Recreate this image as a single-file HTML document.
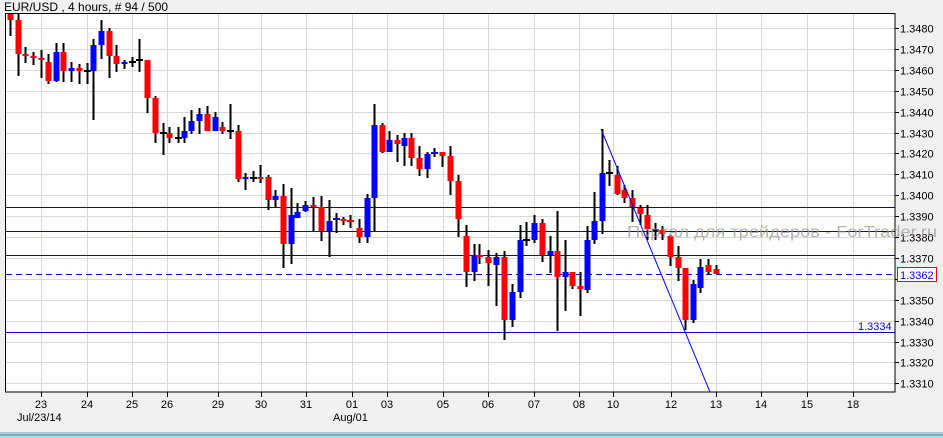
<!DOCTYPE html>
<html><head><meta charset="utf-8"><style>
html,body{margin:0;padding:0;background:#f0f0f0;width:943px;height:438px;overflow:hidden}
svg{display:block;font-family:"Liberation Sans",sans-serif}
</style></head><body>
<svg id="s" width="943" height="438" xmlns="http://www.w3.org/2000/svg">
<rect x="0" y="0" width="943" height="438" fill="#f0f0f0"/>
<text x="4" y="11" font-size="12" fill="#000">EUR/USD , 4 hours, # 94 / 500</text>
<rect x="5" y="13" width="890" height="379" fill="#fff"/>
<g id="grid" stroke="#d9d9d9" stroke-width="1"></g>
<g id="hl"></g>
<g id="candles"></g>
<line x1="601" y1="129" x2="710" y2="392" stroke="#0000ff" stroke-width="1"/>
<rect x="5.5" y="13.5" width="889.5" height="378.5" fill="none" stroke="#000"/>
<g id="axis" font-size="11" fill="#000"></g>
<text x="858" y="330" font-size="11" fill="#0000ff">1.3334</text>
<rect x="897.5" y="267.5" width="39" height="14" fill="#fff" stroke="#ff0000"/>
<text x="900" y="279" font-size="11" fill="#0000ff">1.3362</text>
<text x="627" y="237" font-size="16" fill="#a09898" fill-opacity="0.75" textLength="310" lengthAdjust="spacingAndGlyphs">Портал для трейдеров - ForTrader.ru</text>
<text x="17" y="421" font-size="11">Jul/23/14</text>
<text x="333" y="421" font-size="11">Aug/01</text>
<line x1="0" y1="433" x2="943" y2="433" stroke="#5fb6c8" stroke-width="1"/>
<line x1="0" y1="435" x2="943" y2="435" stroke="#1a6a8a" stroke-width="1"/>
<line x1="0" y1="437" x2="943" y2="437" stroke="#5fd0e0" stroke-width="1"/>
</svg>
<script>
var NS="http://www.w3.org/2000/svg";
function el(p,t,a,txt){var e=document.createElementNS(NS,t);for(var k in a)e.setAttribute(k,a[k]);if(txt)e.textContent=txt;document.getElementById(p).appendChild(e);return e;}
function py(p){return 28+(1.3480-p)*20900;}
for(var i=0;i<=17;i++){var p=1.3310+i*0.001;var y=Math.round(py(p))+0.5;
 el("grid","line",{x1:6,y1:y,x2:895,y2:y});
 el("axis","line",{x1:895,y1:y,x2:899,y2:y,stroke:"#000"});
 if(Math.abs(p-1.3360)>0.0004)el("axis","text",{x:900,y:y+4},p.toFixed(4));}
var vx=[41,87,132,167,218,261,306,352,387,443,488,534,579,613,671,716,761,807,853];
var vl=["23","24","25","26","29","30","31","01","03","05","06","07","08","10","12","13","14","15","18"];
for(var i=0;i<vx.length;i++){el("grid","line",{x1:vx[i]+0.5,y1:14,x2:vx[i]+0.5,y2:392});
 el("axis","line",{x1:vx[i]+0.5,y1:392,x2:vx[i]+0.5,y2:397,stroke:"#000"});
 el("axis","text",{x:vx[i],y:408,"text-anchor":"middle"},vl[i]);}
[207,231,255,332].forEach(function(a){el("hl","line",{x1:6,y1:a+0.5,x2:895,y2:a+0.5,stroke:"#0000c8"});});
el("hl","line",{x1:6,y1:274.5,x2:895,y2:274.5,stroke:"#0000ff","stroke-dasharray":"6,4"});
var C=[
[10,14,13,20,36,"r"],[18,13,20,54,76,"r"],[25,47,54,56,63,"r"],[33,52,56,58,65,"r"],[41,50,58,60,78,"r"],[48,54,62,81,84,"r"],
[56,43,52,81,82,"b"],[63,43,52,71,82,"r"],[71,62,68,71,82,"b"],[79,64,68,71,84,"r"],[87,63,71,71,84,"k"],[93,39,45,71,120,"b"],
[101,20,31,45,59,"b"],[109,28,31,56,78,"r"],[116,45,56,64,72,"r"],[124,60,62,64,69,"b"],[132,57,62,62,67,"k"],[139,39,60,60,72,"k"],
[147,60,60,98,113,"r"],[155,96,98,133,143,"r"],[163,123,133,133,155,"k"],[169,127,133,138,143,"r"],[178,127,138,138,143,"k"],
[184,117,131,138,143,"b"],[191,110,121,131,134,"b"],[199,108,114,121,134,"b"],[207,106,114,131,131,"r"],[215,112,117,131,131,"b"],
[222,122,127,131,134,"r"],[230,104,131,131,139,"k"],[238,125,131,179,182,"r"],[245,173,177,179,190,"b"],[253,171,178,178,182,"k"],
[260,165,177,179,183,"r"],[268,175,177,200,210,"r"],[275,190,196,200,207,"b"],[283,184,196,244,268,"r"],[291,188,215,244,264,"b"],
[297,203,212,218,216,"b"],[305,201,205,211,212,"b"],[313,197,205,207,231,"r"],[321,196,207,231,241,"r"],[329,200,221,231,257,"b"],
[336,213,219,220,233,"b"],[343,217,219,221,225,"r"],[350,215,221,222,228,"r"],[359,219,228,237,243,"r"],[367,194,198,237,243,"b"],
[374,104,125,198,231,"b"],[382,123,125,152,153,"r"],[389,131,140,152,152,"b"],[397,135,140,144,162,"r"],[404,133,138,146,166,"b"],
[411,133,138,158,166,"r"],[419,146,158,169,176,"r"],[427,152,154,169,178,"b"],[434,148,153,154,157,"b"],[442,152,152,156,167,"r"],
[450,146,156,181,195,"r"],[458,175,181,219,237,"r"],[466,225,236,272,287,"r"],[474,244,255,272,281,"b"],[479,244,256,257,264,"r"],
[488,250,257,263,286,"r"],[496,253,257,265,306,"b"],[504,251,257,320,340,"r"],[512,284,292,320,327,"b"],[520,225,240,292,298,"b"],
[526,222,240,240,246,"k"],[534,215,223,240,243,"b"],[542,219,223,255,262,"r"],[550,236,251,255,273,"b"],[557,211,251,277,331,"r"],
[565,240,272,277,311,"b"],[572,272,272,286,289,"r"],[580,272,286,289,316,"r"],[587,226,240,290,293,"b"],[594,192,221,240,244,"b"],
[602,129,173,221,234,"b"],[609,160,173,173,186,"k"],[617,166,175,194,195,"r"],[624,185,190,198,203,"r"],[632,190,198,207,222,"r"],
[640,205,208,214,225,"r"],[647,205,215,229,240,"r"],[655,223,230,230,240,"k"],[662,226,230,234,240,"r"],[670,235,236,257,266,"r"],
[678,246,257,268,281,"r"],[685,268,268,320,330,"r"],[693,280,284,320,323,"b"],[700,259,267,288,293,"b"],[708,259,265,272,275,"r"],
[716,265,269,274,274,"r"]];
C.forEach(function(c){var x=c[0];
 el("candles","line",{x1:x+0.5,y1:Math.max(c[1],14),x2:x+0.5,y2:c[4],stroke:"#000","stroke-width":2});
 var col=c[5]=="r"?"#ff0000":(c[5]=="b"?"#0000ff":"#000");
 var t=Math.max(c[2],14),h=c[3]-t;
 if(h<2){el("candles","rect",{x:x-3,y:t-1,width:7,height:2,fill:col});}
 else el("candles","rect",{x:x-2.5,y:t,width:6,height:h,fill:col});});
</script>
</body></html>
